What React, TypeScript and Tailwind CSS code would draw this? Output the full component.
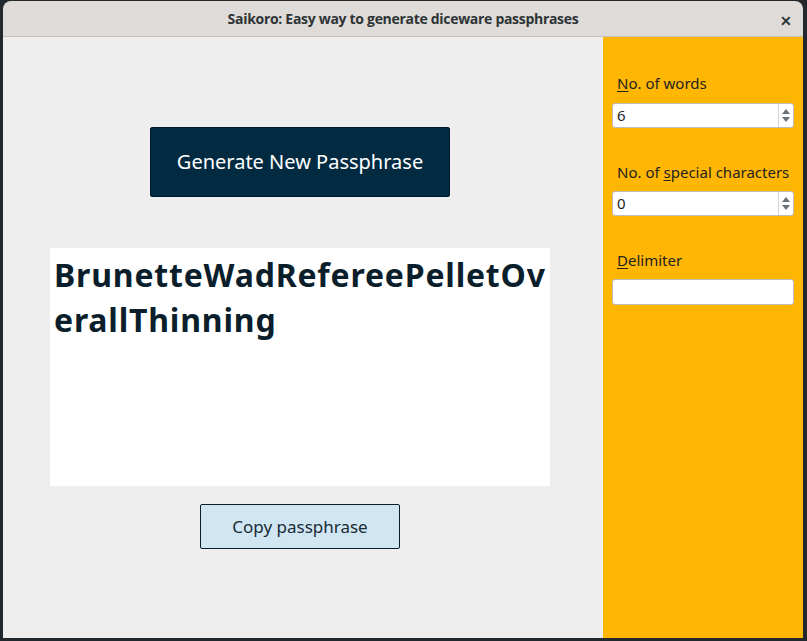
import React from "react";

function Spin({ value }: { value: string }) {
  return (
    <div className="flex h-[25px] w-[182px] items-stretch rounded-[3px] border border-[#c0bdb9] bg-white">
      <div className="flex flex-1 items-center pl-[4px] text-[15px] text-[#1f1f1f]">{value}</div>
      <div className="flex w-[15px] flex-col items-center justify-center gap-[3px] border-l border-[#d6d3cf]">
        <svg width="8" height="5" viewBox="0 0 8 5"><path d="M0 5 L4 0 L8 5 Z" fill="#6b7378" /></svg>
        <svg width="8" height="5" viewBox="0 0 8 5"><path d="M0 0 L4 5 L8 0 Z" fill="#6b7378" /></svg>
      </div>
    </div>
  );
}

export default function App() {
  const font = { fontFamily: '"Noto Sans", "Open Sans", sans-serif' };
  return (
    <div className="h-[641px] w-[807px] bg-[#23282c] pl-[3px] pr-[4px] pt-[1px] pb-[3px]" style={font}>
      <div className="flex h-full w-full flex-col overflow-hidden rounded-t-[8px]">
        <div className="relative flex h-[36px] shrink-0 items-center justify-center border-b border-[#c4c0bc] bg-[#dedbd8]">
          <span className="text-[14px] font-bold tracking-[-0.3px] text-[#2e3436]" style={{ fontFamily: '"Open Sans", sans-serif' }}>
            Saikoro: Easy way to generate diceware passphrases
          </span>
          <span className="absolute right-[11px] top-[9px] text-[14px] font-bold text-[#2e3436]">✕</span>
        </div>
        <div className="flex flex-1">
          <div className="flex w-[600px] flex-col items-center bg-[#eeeeee] pr-[6px] pt-[90px]">
            <div className="flex h-[70px] w-[300px] items-center justify-center rounded-[2px] border border-[#011a28] bg-[#022b42] text-[20px] text-white">
              Generate New Passphrase
            </div>
            <div className="mt-[51px] h-[238px] w-[500px] bg-white px-[4px] pt-[4px]">
              <div className="break-all text-[32px] font-bold leading-[45px] tracking-[0.8px] text-[#0b1e2b]">
                BrunetteWadRefereePelletOverallThinning
              </div>
            </div>
            <div className="mt-[18px] flex h-[45px] w-[200px] items-center justify-center rounded-[2px] border border-[#0b1e2b] bg-[#d0e6f3] text-[17px] text-[#1a2a35]">
              Copy passphrase
            </div>
          </div>
          <div className="flex flex-1 flex-col bg-[#ffb703] pl-[9px] pt-[35px] text-[15px] text-[#222]">
            <div className="pl-[5px]"><span className="underline underline-offset-2">N</span>o. of words</div>
            <div className="mt-[8px]"><Spin value="6" /></div>
            <div className="mt-[33px] pl-[5px]">No. of <span className="underline underline-offset-2">s</span>pecial characters</div>
            <div className="mt-[8px]"><Spin value="0" /></div>
            <div className="mt-[33px] pl-[5px]"><span className="underline underline-offset-2">D</span>elimiter</div>
            <div className="mt-[7px] h-[26px] w-[182px] rounded-[3px] border border-[#c0bdb9] bg-white" />
          </div>
        </div>
      </div>
    </div>
  );
}
